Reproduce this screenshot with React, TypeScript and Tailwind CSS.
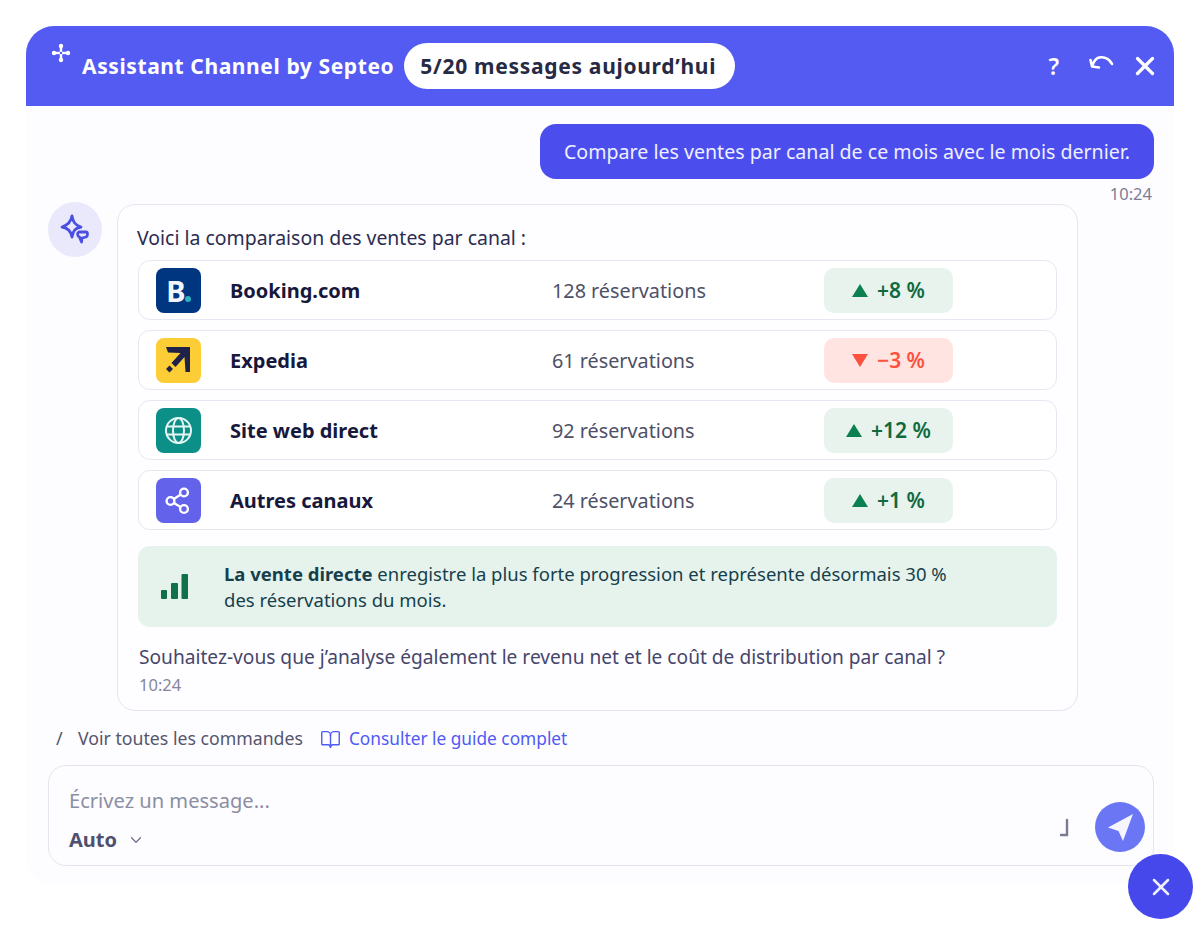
import React from 'react';
import { X, BookOpen, ChevronDown } from 'lucide-react';

const CHANNELS = [
  { name: 'Booking.com', count: '128 réservations', delta: '+8 %', up: true, logo: 'booking' },
  { name: 'Expedia', count: '61 réservations', delta: '−3 %', up: false, logo: 'expedia' },
  { name: 'Site web direct', count: '92 réservations', delta: '+12 %', up: true, logo: 'web' },
  { name: 'Autres canaux', count: '24 réservations', delta: '+1 %', up: true, logo: 'other' },
];

const ChannelLogo: React.FC<{ logo: string }> = ({ logo }) => {
  if (logo === 'booking') {
    return (
      <div className="w-[45px] h-[45px] rounded-[8px] bg-[#003580] relative flex items-center justify-center shrink-0">
        <span className="text-[#f2f5fb] font-bold text-[29px] leading-none mr-[5px]">B</span>
        <span className="absolute left-[29px] top-[28px] w-[6px] h-[6px] rounded-full bg-[#2bb3c0]"></span>
      </div>
    );
  }
  if (logo === 'expedia') {
    return (
      <div className="w-[45px] h-[45px] rounded-[8px] bg-[#fdcd36] flex items-center justify-center shrink-0">
        <svg width="45" height="45" viewBox="0 0 45 45" fill="#1f2248">
          <path d="M10 9 H34 V34 H29.5 L28.5 19 L19.5 29 L15.5 25 L24.5 15 L12 14.5 Z" />
          <path d="M13.5 27.5 L17 31 L13.5 34.5 L10 31 Z" />
        </svg>
      </div>
    );
  }
  if (logo === 'web') {
    return (
      <div className="w-[45px] h-[45px] rounded-[8px] bg-[#0b8f86] flex items-center justify-center shrink-0">
        <svg width="29" height="29" viewBox="0 0 29 29" fill="none" stroke="#e6f6f4" strokeWidth="2">
          <circle cx="14.5" cy="14.5" r="12.5" />
          <ellipse cx="14.5" cy="14.5" rx="5.5" ry="12.5" />
          <path d="M3 10.5 H26 M3 18.5 H26" />
        </svg>
      </div>
    );
  }
  return (
    <div className="w-[45px] h-[45px] rounded-[8px] bg-[#6362ea] flex items-center justify-center shrink-0">
      <svg width="29" height="29" viewBox="0 0 29 29" fill="none" stroke="#ffffff" strokeWidth="2.4">
        <circle cx="20" cy="6.5" r="3.9" />
        <circle cx="6.5" cy="15" r="3.9" />
        <circle cx="20" cy="23" r="3.9" />
        <path d="M9.8 13 L16.8 8.5 M9.8 17 L16.6 21" />
      </svg>
    </div>
  );
};

const App: React.FC = () => {
  return (
    <div className="relative w-[1200px] h-[932px] bg-white pt-[26px] pl-[26px] font-['Noto_Sans','Open_Sans',sans-serif] overflow-hidden">
      <div className="w-[1148px] h-[859px] rounded-[28px] bg-[#fdfcfe] flex flex-col overflow-hidden">

        {/* HEADER */}
        <div className="h-[80px] shrink-0 bg-[#535bf2] flex items-center pl-[25px] pr-[14px] text-white">
          <svg width="20" height="20" viewBox="0 0 20 20" fill="white" className="mb-[27px] shrink-0">
            <rect x="8.8" y="2" width="2.4" height="16" />
            <rect x="2" y="8.8" width="16" height="2.4" />
            <circle cx="10" cy="3" r="2.2" />
            <circle cx="10" cy="17" r="2.2" />
            <circle cx="3" cy="10" r="2.2" />
            <circle cx="17" cy="10" r="2.2" />
            <circle cx="10" cy="10" r="1.2" fill="#535bf2" />
          </svg>
          <span className="ml-[11px] pt-[1px] text-[21px] font-bold tracking-[0.6px] whitespace-nowrap">Assistant Channel by Septeo</span>
          <div className="ml-[10px] h-[46px] w-[331px] rounded-full bg-white text-[#262a44] flex items-center justify-center pt-[1px] pr-[3px] text-[21px] font-bold tracking-[0.7px] whitespace-nowrap">
            5/20 messages aujourd’hui
          </div>
          <div className="ml-auto flex items-center">
            <span className="text-[23px] font-semibold leading-none">?</span>
            <svg width="26" height="20" viewBox="0 0 26 20" fill="none" stroke="white" strokeWidth="2.6" strokeLinecap="round" strokeLinejoin="round" className="ml-[29px] mb-[6px]">
              <path d="M24 11 C21 5 15 3.5 11 4.5 C8 5.5 6 8 4.5 12" />
              <path d="M2.5 7 L4 13.5 L11 14.5" />
            </svg>
            <X size={30} strokeWidth={2.6} className="ml-[16px]" />
          </div>
        </div>

        {/* USER MESSAGE */}
        <div className="flex flex-col items-end pt-[18px] pr-[20px]">
          <div className="h-[55px] w-[614px] rounded-[16px] bg-[#4b4ded] text-[#eef0ff] text-[19.6px] flex items-center justify-center whitespace-nowrap">
            Compare les ventes par canal de ce mois avec le mois dernier.
          </div>
          <div className="mt-[5px] mr-[2px] text-[16.5px] leading-[20px] text-[#7b7e95]">10:24</div>
        </div>

        {/* ASSISTANT MESSAGE */}
        <div className="flex items-start pl-[22px] mt-[-2px]">
          <div className="w-[54px] h-[55px] rounded-full bg-[#eae9fb] flex items-center justify-center shrink-0">
            <svg width="30" height="32" viewBox="0 0 30 32" fill="none" stroke="#4a4fe0" strokeWidth="2.8" strokeLinejoin="round">
              <path d="M12 2 C13 8 15 11 21 13 C15 14 13 17 12 23 C11 17 8 14 2 13 C8 11 11 8 12 2 Z" />
              <path d="M19 18 H26 C28 18 28 22 26 23 L22 24 L21.5 28 L19.5 23 C17 22 17 19 19 18 Z" fill="#eae9fb" />
            </svg>
          </div>
          <div className="ml-[15px] mt-[2px] w-[961px] h-[507px] rounded-[18px] border border-[#e3e5ef] bg-[#fefdff] pl-[20px] pr-[20px]">
            <div className="mt-[19px] ml-[-1px] text-[19.45px] leading-[27px] text-[#2b2c50] whitespace-nowrap">Voici la comparaison des ventes par canal :</div>
            <div className="mt-[9px] flex flex-col gap-[10px]">
              {CHANNELS.map((c) => (
                <div key={c.name} className="h-[60px] rounded-[12px] border border-[#e6e7f1] bg-white flex items-center pl-[17px]">
                  <ChannelLogo logo={c.logo} />
                  <span className="ml-[29px] w-[322px] pt-[1px] text-[20px] font-bold text-[#17183b] whitespace-nowrap">{c.name}</span>
                  <span className="w-[272px] pt-[1px] text-[19.8px] text-[#4e5068] whitespace-nowrap">{c.count}</span>
                  <div className={`w-[129px] h-[45px] rounded-[10px] flex items-center justify-center gap-[9px] text-[21px] font-semibold ${c.up ? 'bg-[#e7f3ec] text-[#11693f]' : 'bg-[#ffe4e1] text-[#fb5240]'}`}>
                    <svg width="16" height="13" viewBox="0 0 16 13" fill={c.up ? '#0d8051' : '#fb5240'}>
                      <path d={c.up ? 'M8 0 L16 13 H0 Z' : 'M0 0 H16 L8 13 Z'} />
                    </svg>
                    <span className="pt-[2px]">{c.delta}</span>
                  </div>
                </div>
              ))}
            </div>
            <div className="mt-[16px] h-[81px] rounded-[12px] bg-[#e6f3ed] flex items-center pl-[22px]">
              <svg width="30" height="28" viewBox="0 0 30 28" fill="#10704a" className="shrink-0">
                <rect x="1" y="17" width="6" height="9" rx="1" />
                <rect x="11" y="10" width="7" height="16" rx="1" />
                <rect x="21.5" y="1" width="6.5" height="25" rx="1" />
              </svg>
              <p className="ml-[34px] text-[18.5px] leading-[26px] text-[#173f4b] w-[745px]">
                <span className="font-bold">La vente directe</span> enregistre la plus forte progression et représente désormais 30 % des réservations du mois.
              </p>
            </div>
            <div className="mt-[17px] ml-[1px] text-[19.15px] leading-[27px] text-[#46466b] whitespace-nowrap">
              Souhaitez-vous que j’analyse également le revenu net et le coût de distribution par canal ?
            </div>
            <div className="mt-[4px] ml-[1px] text-[16.5px] leading-[20px] text-[#85869c]">10:24</div>
          </div>
        </div>

        {/* COMMANDS */}
        <div className="flex items-center pl-[30px] mt-[13px] h-[28px] whitespace-nowrap">
          <span className="text-[18px] text-[#55566e] w-[22px]">/</span>
          <span className="text-[17.7px] text-[#55566e]">Voir toutes les commandes</span>
          <BookOpen size={21} strokeWidth={1.6} className="ml-[17px] mt-[2px] text-[#4f5af5]" />
          <span className="ml-[8px] mt-[2px] text-[17.3px] text-[#4f5af5]">Consulter le guide complet</span>
        </div>

        {/* INPUT */}
        <div className="ml-[22px] mt-[13px] w-[1106px] h-[101px] rounded-[18px] border border-[#e3e5ef] bg-[#fdfcff] flex justify-between pl-[20px] pr-[8px]">
          <div className="flex flex-col">
            <span className="mt-[21px] text-[20.1px] leading-[27px] text-[#8c8ea3]">Écrivez un message...</span>
            <div className="mt-[12px] flex items-center text-[#4f5070]">
              <span className="text-[20px] font-bold leading-[27px]">Auto</span>
              <ChevronDown size={18} strokeWidth={1.6} className="ml-[10px] text-[#6e7088]" />
            </div>
          </div>
          <div className="flex items-end pb-[13px]">
            <svg width="10" height="20" viewBox="0 0 10 20" fill="none" stroke="#7a7c92" strokeWidth="2.4" strokeLinecap="round" className="mb-[14px]">
              <path d="M8 2 V17 H2" />
            </svg>
            <div className="ml-[26px] w-[50px] h-[50px] rounded-full bg-[#6a76f3] flex items-center justify-center">
              <svg width="28" height="28" viewBox="0 0 28 28" fill="#f4f5ff">
                <path d="M27 1 L17 28 L12.5 18 L2 14.5 Z" />
              </svg>
            </div>
          </div>
        </div>
      </div>

      {/* FLOATING CLOSE */}
      <button className="absolute left-[1128px] top-[854px] w-[65px] h-[65px] rounded-full bg-[#4648ec] flex items-center justify-center text-[#eef0ff]">
        <X size={28} strokeWidth={2.2} />
      </button>
    </div>
  );
};

export default App;
